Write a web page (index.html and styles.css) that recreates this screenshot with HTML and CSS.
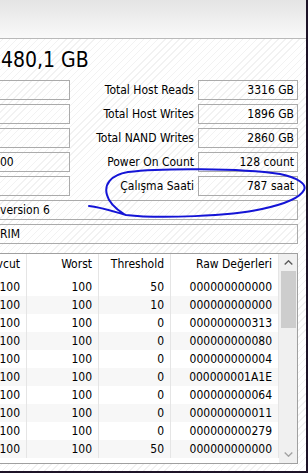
FILE: index.html
```html
<!DOCTYPE html>
<html lang="tr">
<head>
    <meta charset="UTF-8">
    <meta name="viewport" content="width=device-width, initial-scale=1.0">
    <title>Disk Bilgisi</title>
    <link rel="stylesheet" href="styles.css">
</head>
<body>
    <div class="window">
        <div class="toolbar"></div>
        <div class="capacity">480,1 GB</div>

        <div class="stats">
            <div class="field"></div>
            <div class="label">Total Host Reads</div>
            <div class="field value">3316 GB</div>

            <div class="field"></div>
            <div class="label">Total Host Writes</div>
            <div class="field value">1896 GB</div>

            <div class="field"></div>
            <div class="label">Total NAND Writes</div>
            <div class="field value">2860 GB</div>

            <div class="field">00</div>
            <div class="label">Power On Count</div>
            <div class="field value">128 count</div>

            <div class="field"></div>
            <div class="label">Çalışma Saati</div>
            <div class="field value">787 saat</div>

            <div class="field wide">version 6</div>
            <div class="field wide">RIM</div>
        </div>

        <div class="smart">
            <div class="smart-table">
                <div class="row head">
                    <span class="cell c1"><span>Mevcut</span></span>
                    <span class="cell c2"><span>Worst</span></span>
                    <span class="cell c3"><span>Threshold</span></span>
                    <span class="cell c4"><span>Raw Değerleri</span></span>
                </div>
                <div class="smart-body">
                    <div class="row"><span class="cell c1"><span>100</span></span><span class="cell c2"><span>100</span></span><span class="cell c3"><span>50</span></span><span class="cell c4"><span>000000000000</span></span></div>
                    <div class="row"><span class="cell c1"><span>100</span></span><span class="cell c2"><span>100</span></span><span class="cell c3"><span>10</span></span><span class="cell c4"><span>000000000000</span></span></div>
                    <div class="row"><span class="cell c1"><span>100</span></span><span class="cell c2"><span>100</span></span><span class="cell c3"><span>0</span></span><span class="cell c4"><span>000000000313</span></span></div>
                    <div class="row"><span class="cell c1"><span>100</span></span><span class="cell c2"><span>100</span></span><span class="cell c3"><span>0</span></span><span class="cell c4"><span>000000000080</span></span></div>
                    <div class="row"><span class="cell c1"><span>100</span></span><span class="cell c2"><span>100</span></span><span class="cell c3"><span>0</span></span><span class="cell c4"><span>000000000004</span></span></div>
                    <div class="row"><span class="cell c1"><span>100</span></span><span class="cell c2"><span>100</span></span><span class="cell c3"><span>0</span></span><span class="cell c4"><span>000000001A1E</span></span></div>
                    <div class="row"><span class="cell c1"><span>100</span></span><span class="cell c2"><span>100</span></span><span class="cell c3"><span>0</span></span><span class="cell c4"><span>000000000064</span></span></div>
                    <div class="row"><span class="cell c1"><span>100</span></span><span class="cell c2"><span>100</span></span><span class="cell c3"><span>0</span></span><span class="cell c4"><span>000000000011</span></span></div>
                    <div class="row"><span class="cell c1"><span>100</span></span><span class="cell c2"><span>100</span></span><span class="cell c3"><span>0</span></span><span class="cell c4"><span>000000000279</span></span></div>
                    <div class="row"><span class="cell c1"><span>100</span></span><span class="cell c2"><span>100</span></span><span class="cell c3"><span>50</span></span><span class="cell c4"><span>000000000000</span></span></div>
                </div>
            </div>
            <div class="scrollbar">
                <span class="arrow">
                    <svg width="9" height="5" viewBox="0 0 9 5"><polyline points="0.7,4.5 4.5,0.8 8.3,4.5" class="chev up"/></svg>
                </span>
                <span class="thumb"></span>
                <span class="track"></span>
                <span class="arrow">
                    <svg width="9" height="5" viewBox="0 0 9 5"><polyline points="0.7,0.5 4.5,4.2 8.3,0.5" class="chev down"/></svg>
                </span>
            </div>
        </div>

        <!-- el ile cizilmis isaret -->
        <svg class="annotation" width="306" height="471" viewBox="0 0 306 471">
            <path d="M89 206 C100 207 112 211 126 215 C160 219 230 216 262 209 C285 204 300 198 304 190 C307 184 298 178 280 174 C240 168 160 168 128 172 C110 175 104 185 107 195 C109 203 116 209 124 214"/>
        </svg>
    </div>
</body>
</html>
```

FILE: styles.css
```css
body {
    margin: 0;
    background-color: #1d1327;
    font-family: "DejaVu Sans Condensed", "DejaVu Sans", sans-serif;
    font-stretch: condensed;
    font-size: 12px;
    color: #000;
}
.window {
    position: relative;
    width: 306px;
    height: 471px;
    overflow: hidden;
    background-color: #fff;
    background-image: repeating-linear-gradient(135deg, #fff 0 4px, #f2f2f2 4px 5px);
}
.toolbar {
    height: 38px;
    background: linear-gradient(#e4e4e4, #f9f9f9);
    border-bottom: 1px solid #b9b9b9;
}
.capacity {
    padding: 9px 0 8px 1px;
    font-size: 21px;
    line-height: 24px;
    white-space: nowrap;
}
.stats {
    display: grid;
    grid-template-columns: 70px 120px 100px;
    grid-auto-rows: 20px;
    column-gap: 4px;
    row-gap: 4px;
    margin-right: 8px;
}
.field {
    border: 1px solid #ababab;
    border-left: none;
    line-height: 18px;
    padding-right: 4px;
    overflow: hidden;
    white-space: nowrap;
}
.field.value {
    border-left: 1px solid #ababab;
    text-align: right;
    padding-right: 3px;
}
.field.wide {
    grid-column: 1 / -1;
}
.label {
    text-align: right;
    line-height: 20px;
    white-space: nowrap;
}
.smart {
    display: flex;
    height: 211px;
    box-sizing: border-box;
    margin: 9px 8px 0 0;
    border: 1px solid #a0a0a0;
    border-left: none;
    background-color: #fff;
}
.smart-table {
    width: 279px;
}
.row {
    display: flex;
    height: 18px;
    line-height: 18px;
}
.row.head {
    height: 24px;
    line-height: 20px;
}
.smart-body .row:nth-child(even) {
    background-color: #f7f7f7;
}
.cell {
    display: flex;
    justify-content: flex-end;
    box-sizing: border-box;
    padding-right: 6px;
    border-right: 1px solid #e5e5e5;
    overflow: hidden;
    white-space: nowrap;
}
.cell > span {
    flex-shrink: 0;
}
.c1 { width: 27px; }
.c2 { width: 72px; }
.c3 { width: 72px; }
.c4 { width: 108px; }
.scrollbar {
    display: flex;
    flex-direction: column;
    align-items: center;
    width: 18px;
    background-color: #f0f0f0;
}
.arrow {
    display: flex;
    align-items: center;
    justify-content: center;
    height: 17px;
}
.chev {
    fill: none;
    stroke-width: 1.4;
}
.chev.up {
    stroke: #5a5a5a;
}
.chev.down {
    stroke: #a3a3a3;
}
.thumb {
    width: 15px;
    height: 57px;
    background-color: #cdcdcd;
}
.track {
    flex: 1;
}
.annotation {
    position: absolute;
    left: 0;
    top: 0;
    pointer-events: none;
}
.annotation path {
    fill: none;
    stroke: #1414d6;
    stroke-width: 2;
    stroke-linecap: round;
    stroke-linejoin: round;
}
```
